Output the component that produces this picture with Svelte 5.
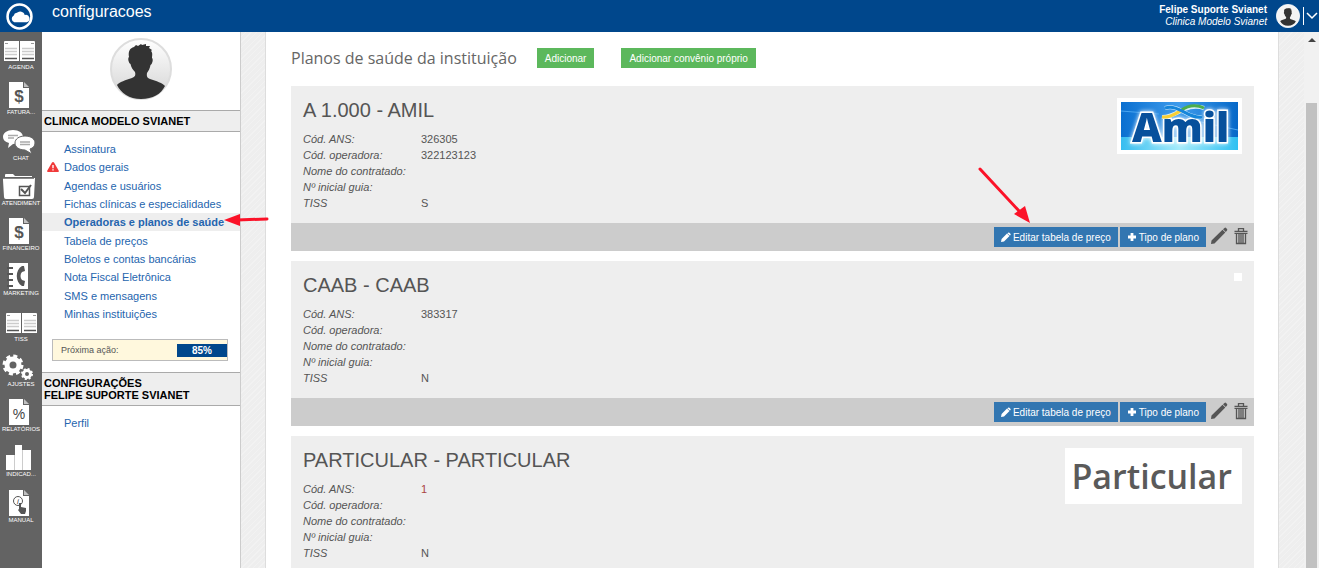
<script lang="ts">
  type Plan = {
    name: string;
    ans: string;
    operator: string;
    tiss: string;
    logo: "amil" | "particular" | "none";
    local?: boolean;
  };

  const modules = [
    { label: "AGENDA", icon: "book" },
    { label: "FATURA...", icon: "money" },
    { label: "CHAT", icon: "chat" },
    { label: "ATENDIMENT", icon: "folder" },
    { label: "FINANCEIRO", icon: "money" },
    { label: "MARKETING", icon: "phone" },
    { label: "TISS", icon: "book" },
    { label: "AJUSTES", icon: "gears" },
    { label: "RELATÓRIOS", icon: "percent" },
    { label: "INDICAD...", icon: "bars" },
    { label: "MANUAL", icon: "manual" },
  ];

  const links = [
    "Assinatura",
    "Dados gerais",
    "Agendas e usuários",
    "Fichas clínicas e especialidades",
    "Operadoras e planos de saúde",
    "Tabela de preços",
    "Boletos e contas bancárias",
    "Nota Fiscal Eletrônica",
    "SMS e mensagens",
    "Minhas instituições",
  ];

  const plans: Plan[] = [
    { name: "A 1.000 - AMIL", ans: "326305", operator: "322123123", tiss: "S", logo: "amil" },
    { name: "CAAB - CAAB", ans: "383317", operator: "", tiss: "N", logo: "none" },
    { name: "PARTICULAR - PARTICULAR", ans: "1", operator: "", tiss: "N", logo: "particular", local: true },
  ];

  let active = $state("Operadoras e planos de saúde");
</script>

{#snippet person()}
  <path
    fill="#333"
    d="M7 47c2-3 9-5 15-7 3-1 4-3 3-6-2-2-4-5-4.500-8-2-1-3-6-1.500-7-1-6 1-9 5-10l2-2 2 1 3-2 1 1 4-1 0 2 4 0-1 2 3 2-1 1c2 2 1 5 1 7 1.500 1 .5 6-1.500 7-.5 3-2 6-3.500 8-.5 3 0 5 3 6 6 2 13 4 15 7-4 8-12 13-24 13S11 55 7 47z"
  />
{/snippet}

{#snippet sheet()}
  <path fill="#fff" d="M9 4h14v6h6v20H9z" />
  <path fill="#fff" d="M24 4l5 5h-5z" opacity=".6" />
{/snippet}

{#snippet moduleIcon(icon: string)}
  <svg class="module-icon" viewBox="0 0 42 30" aria-hidden="true">
    {#if icon === "book"}
      <path fill="#fff" d="M4 9q0-1 1-1h14v20H4zM20 8h14q1 0 1 1v19H20z" />
      <path stroke="#ccc" stroke-width="1.500" d="M5 15.500h12M22 15.500h12M5 18.500h12M22 18.500h12M5 21.500h12M22 21.500h12" />
      <path stroke="#555" stroke-width="1.500" d="M5 25.500h12M22 25.500h12" />
      <path stroke="#999" d="M5 10.500h3M31 10.500h3" />
    {:else if icon === "money"}
      {@render sheet()}
      <text x="19" y="24" font-size="17" font-weight="bold" text-anchor="middle" fill="#555">$</text>
    {:else if icon === "chat"}
      <path fill="#fff" d="M13 6c6 0 10 3 10 7s-4 7-10 7l-5 4 1-5c-4-1-6-3-6-6 0-4 4-7 10-7z" />
      <path
        fill="#fff"
        stroke="#636363"
        d="M25 12c6 0 10 3 10 7 0 3-2 5-5 6l2 5-7-4c-6 0-10-3-10-7s4-7 10-7z"
      />
      <path stroke="#aaa" stroke-width="1.500" d="M8 11.500h10M8 14h6M20 18h10M20 20.500h10" />
    {:else if icon === "folder"}
      <path fill="#fff" d="M3 9h32l-1 19q0 2-2 2H6q-2 0-2-2L3 11z" />
      <path fill="#fff" d="M5 8V6q0-1 1-1h7l2 2h17v1z" />
      <path fill="none" stroke="#888" d="M3 9.500h31" />
      <path fill="none" stroke="#555" stroke-width="1.500" d="M19.500 17.500h10v9h-10z" />
      <path fill="none" stroke="#555" stroke-width="2" d="M21 20l4 4 6-8" />
    {:else if icon === "phone"}
      <path fill="#fff" d="M9 4h19v26H9z" />
      <path stroke="#555" stroke-width="2" d="M7 9h6M7 15h6M7 21h6M7 27h6" />
      <path fill="#555" d="M24 7h-2c-7 4-7 16 0 20h2l1-5-3-1c-2-2-2-6 0-8l3-1z" />
    {:else if icon === "gears"}
      <circle cx="13" cy="15" r="6" fill="none" stroke="#fff" stroke-width="5" />
      <circle cx="13" cy="15" r="9" fill="none" stroke="#fff" stroke-width="3" stroke-dasharray="4 3.070" />
      <circle cx="27" cy="24" r="3.500" fill="none" stroke="#fff" stroke-width="3" />
      <circle cx="27" cy="24" r="5" fill="none" stroke="#fff" stroke-width="2" stroke-dasharray="2 1.930" />
    {:else if icon === "percent"}
      {@render sheet()}
      <text x="19" y="24" font-size="14" text-anchor="middle" fill="#444">%</text>
    {:else if icon === "bars"}
      <path fill="#fff" d="M6 15h8v15H6zM15 5h7v25h-7zM23 10h8v20h-8z" />
      <path fill="#ccc" d="M14 15h1v15h-1zM22 10h1v20h-1z" />
    {:else}
      {@render sheet()}
      <circle cx="18" cy="15" r="4.500" fill="none" stroke="#555" />
      <text x="18" y="18" font-size="8" font-style="italic" text-anchor="middle" fill="#444">i</text>
      <path fill="#555" d="M19 17h2v4l5 1v3l-1 3h-4l-3-4 1-1z" />
    {/if}
  </svg>
{/snippet}

<div class="page">
  <header class="topbar">
    <a class="brand" href="#inicio" aria-label="Início">
      <svg viewBox="0 0 26 26">
        <circle cx="13" cy="13" r="11.500" fill="none" stroke="#fff" stroke-width="2.500" />
        <path fill="#fff" d="M8 18.500a3.500 3.500 0 0 1-.5-6.500 3 3 0 0 1 3-2.500 4.500 4.500 0 0 1 7.500 2 3.600 3.600 0 0 1 2 7z" />
      </svg>
    </a>
    <h1>configuracoes</h1>
    <div class="user">
      <strong>Felipe Suporte Svianet</strong>
      <em>Clinica Modelo Svianet</em>
    </div>
    <svg class="user-photo" viewBox="0 0 62 62" aria-hidden="true">
      <circle cx="31" cy="31" r="30" fill="#f4f4f4" stroke="#fff" stroke-width="2" />
      <g transform="translate(5 5) scale(.84)">{@render person()}</g>
    </svg>
    <button class="user-menu" aria-label="Menu do usuário">
      <svg viewBox="0 0 12 8"><path d="M1 1l5 5 5-5" fill="none" stroke="#fff" stroke-width="1.500" /></svg>
    </button>
  </header>

  <div class="workspace">
    <nav class="rail" aria-label="Módulos">
      {#each modules as mod}
        <a href="#{mod.label.toLowerCase()}" class:shifted={mod.label === "TISS"}>
          {@render moduleIcon(mod.icon)}
          <span>{mod.label}</span>
        </a>
      {/each}
    </nav>

    <aside class="sidebar">
      <svg class="avatar" viewBox="0 0 62 62" role="img" aria-label="Foto do usuário">
        <defs>
          <linearGradient id="avatar-bg" x1="0" y1="0" x2="0" y2="1">
            <stop offset="0" stop-color="#fff" />
            <stop offset="1" stop-color="#d4d4d4" />
          </linearGradient>
        </defs>
        <circle cx="31" cy="31" r="30" fill="url(#avatar-bg)" stroke="#ddd" stroke-width="2" />
        {@render person()}
      </svg>

      <h2>CLINICA MODELO SVIANET</h2>
      <ul class="links">
        {#each links as link}
          <li class:active={link === active}>
            {#if link === "Dados gerais"}
              <svg class="warning" viewBox="0 0 12 10" aria-hidden="true">
                <path fill="#f03a3a" d="M6 0q.7 0 1 .6l4.800 8.200q.4 1.200-.8 1.200H1q-1.200 0-.8-1.200L5 .6q.3-.6 1-.6z" />
                <path stroke="#fff" stroke-width="1.400" d="M6 3v3.200M6 7.200v1.400" />
              </svg>
            {/if}
            <a href="#config" onclick={() => (active = link)}>{link}</a>
            {#if link === "Operadoras e planos de saúde"}
              <svg class="arrow-left" viewBox="0 0 46 14" aria-hidden="true">
                <path stroke="#fb1228" stroke-width="3" stroke-linecap="round" d="M14 7l30-1" />
                <path fill="#fb1228" d="M1 7l16-6v12z" />
              </svg>
            {/if}
          </li>
        {/each}
      </ul>

      <div class="next-action">
        <span>Próxima ação:</span>
        <strong>85%</strong>
      </div>

      <h2>CONFIGURAÇÕES<br />FELIPE SUPORTE SVIANET</h2>
      <ul class="links short">
        <li><a href="#perfil">Perfil</a></li>
      </ul>
    </aside>

    <main>
      <div class="sheet">
        <div class="toolbar">
          <h2>Planos de saúde da instituição</h2>
          <button class="add">Adicionar</button>
          <button class="add">Adicionar convênio próprio</button>
        </div>

        {#each plans as plan, i}
          <article class="plan">
            <div class="plan-body">
              <div class="details">
                <h3>{plan.name}</h3>
                <dl>
                  <dt>Cód. ANS:</dt>
                  <dd class:local={plan.local}>{plan.ans}</dd>
                  <dt>Cód. operadora:</dt>
                  <dd>{plan.operator}</dd>
                  <dt>Nome do contratado:</dt>
                  <dd></dd>
                  <dt>Nº inicial guia:</dt>
                  <dd></dd>
                  <dt>TISS</dt>
                  <dd>{plan.tiss}</dd>
                </dl>
              </div>
              <div class="logo">
                {#if plan.logo === "amil"}
                  <svg class="amil" viewBox="0 0 117 48" role="img" aria-label="Amil">
                    <defs>
                      <linearGradient id="amil-sky">
                        <stop offset="0" stop-color="#0a6fd0" />
                        <stop offset=".5" stop-color="#3f9cec" />
                        <stop offset="1" stop-color="#0668c8" />
                      </linearGradient>
                      <linearGradient id="amil-sea">
                        <stop offset="0" stop-color="#37bdf0" />
                        <stop offset=".5" stop-color="#a5ecfb" />
                        <stop offset="1" stop-color="#2fc0f2" />
                      </linearGradient>
                    </defs>
                    <rect width="117" height="48" fill="url(#amil-sky)" />
                    <rect y="35" width="117" height="13" fill="url(#amil-sea)" />
                    <path stroke="#4ba5ef" d="M0 9l38 3M80 20l37 8" />
                    <text class="amil-name" x="11" y="40">Amil</text>
                    <path fill="none" stroke="#d8effc" stroke-width="4" d="M41 15c14 1 24-15 42-9M44 6c15-4 22 11 37 9" />
                    <path fill="none" stroke="#f8cf35" stroke-width="3" d="M41 15c9 1 14-4 20-7" />
                    <path fill="none" stroke="#4cad4e" stroke-width="3" d="M60 8.500c7-5 15-6 23-2.500" />
                    <path fill="none" stroke="#1686da" stroke-width="3" d="M44 6c15-4 22 11 37 9" />
                  </svg>
                {:else if plan.logo === "particular"}
                  <span class="particular">Particular</span>
                {/if}
              </div>
            </div>
            <footer>
              {#if i === 0}
                <svg class="arrow-down" viewBox="0 0 54 60" aria-hidden="true">
                  <path stroke="#fb1228" stroke-width="3" stroke-linecap="round" d="M2 3l40 43" />
                  <path fill="#fb1228" d="M52 57l-16-9 11-8z" />
                </svg>
              {/if}
              <button class="action">
                <svg viewBox="0 0 10 10" aria-hidden="true">
                  <path fill="#fff" d="M0 10l.6-3L6 1.500 8.500 4 3 9.400zM6.700.9Q7.500 0 8.400.7l1 1q.7.900-.2 1.600l-.3.3L6.400 1.200z" />
                </svg>
                Editar tabela de preço
              </button>
              <button class="action">
                <svg viewBox="0 0 10 10" aria-hidden="true">
                  <path fill="#fff" d="M3.600 1h2.800v2.600H9v2.800H6.400V9H3.600V6.400H1V3.600h2.600z" />
                </svg>
                Tipo de plano
              </button>
              <button class="tool" aria-label="Editar">
                <svg viewBox="0 0 18 18" aria-hidden="true">
                  <path fill="#555" d="M1 17l.5-3.500L12.500 2.700l2.800 2.800L4.500 16.400zM13 2.200L14.500.9q.8-.7 1.600 0l.9 1q.7.8 0 1.600L15.800 5z" />
                </svg>
              </button>
              <button class="tool" aria-label="Excluir">
                <svg viewBox="0 0 18 18" aria-hidden="true">
                  <path fill="none" stroke="#555" stroke-width="1.300" d="M6.500 4V1.600h5V4M2.500 4.300h13M2.500 6.300h13M4.500 7v9.500h9V7M7 7v9M9 7v9M11 7v9" />
                </svg>
              </button>
            </footer>
          </article>
        {/each}
      </div>
    </main>

    <div class="scrollbar" aria-hidden="true">
      <svg viewBox="0 0 8 4"><path fill="#444" d="M4 0l4 4H0z" /></svg>
      <div class="thumb"></div>
    </div>
  </div>
</div>

<style>
  :global(body) {
    margin: 0;
  }
  .page {
    display: flex;
    flex-direction: column;
    height: 100vh;
    overflow: hidden;
    font-family: "Liberation Sans", Arial, sans-serif;
    font-size: 11px;
    color: #555;
  }
  h1,
  h2,
  h3,
  ul,
  dl,
  dd {
    margin: 0;
    padding: 0;
  }
  a {
    color: #2565ae;
    text-decoration: none;
  }
  button {
    border: 0;
    padding: 0;
    font: inherit;
    cursor: pointer;
  }
  svg {
    display: block;
  }

  .topbar {
    display: flex;
    align-items: center;
    flex: none;
    height: 32px;
    background: #00478c;
    color: #fff;
  }
  .brand {
    width: 46px;
    padding-left: 6px;
  }
  .brand svg {
    width: 27px;
    height: 27px;
  }
  h1 {
    flex: 1;
    height: 32px;
    font-size: 16px;
    font-weight: 400;
    line-height: 24px;
  }
  .user {
    display: flex;
    flex-direction: column;
    font-size: 10px;
    line-height: 12px;
    text-align: right;
  }
  .user-photo {
    width: 24px;
    height: 24px;
    margin: 0 3px 0 9px;
  }
  .user-menu {
    padding: 5px 1px 5px 2px;
    border-left: 1px solid #fff;
    background: none;
  }
  .user-menu svg {
    width: 12px;
    height: 8px;
  }

  .workspace {
    display: flex;
    flex: 1;
    min-height: 0;
  }
  .rail {
    display: grid;
    grid-auto-rows: 1fr;
    flex: none;
    box-sizing: border-box;
    width: 42px;
    min-height: 498px;
    padding: 1px 0 37px;
    overflow: hidden;
    background: #636363;
  }
  .rail a {
    min-width: 0;
    color: #fff;
    font-size: 6px;
    line-height: 8px;
    text-align: center;
    white-space: nowrap;
  }
  .rail a span {
    display: block;
  }
  .module-icon {
    width: 42px;
    height: 30px;
  }
  .shifted .module-icon {
    padding-left: 2px;
  }

  .sidebar {
    flex: none;
    width: 198px;
    border-right: 1px solid #ccc;
    background: #fff;
  }
  .avatar {
    width: 62px;
    height: 62px;
    margin: 6px auto 10px;
  }
  .sidebar h2 {
    padding: 4px 2px;
    border: solid #aaa;
    border-width: 1px 0;
    background: #eee;
    color: #000;
    font-size: 11px;
    line-height: 12px;
  }
  .links {
    display: grid;
    grid-auto-rows: 1fr;
    min-height: 183px;
    padding-top: 8px;
    list-style: none;
  }
  .links.short {
    min-height: 0;
  }
  .links li {
    position: relative;
    display: flex;
    align-items: center;
    min-height: 18px;
    padding-left: 22px;
    white-space: nowrap;
  }
  .links .active {
    background: #eee;
    font-weight: 700;
  }
  .warning {
    position: absolute;
    left: 5px;
    width: 12px;
    height: 10px;
  }
  .arrow-left {
    position: absolute;
    left: 181px;
    top: 0;
    z-index: 2;
    width: 46px;
    height: 14px;
  }
  .next-action {
    display: flex;
    align-items: center;
    justify-content: space-between;
    height: 20px;
    margin: 16px 12px 11px 10px;
    padding-left: 8px;
    border: 1px solid #bbb;
    background: #fff8dd;
    font-size: 9px;
  }
  .next-action strong {
    width: 50px;
    background: #00478c;
    color: #fff;
    font-size: 10px;
    line-height: 13px;
    text-align: center;
  }

  main {
    flex: 1;
    min-width: 0;
    padding: 0 25px 0 24px;
    overflow-y: auto;
    scrollbar-width: none;
    background: repeating-linear-gradient(135deg, #eee 0 3px, #f2f2f2 3px 4px);
  }
  .sheet {
    padding: 16px 24px 10px 25px;
    border: solid #ddd;
    border-width: 0 1px;
    background: #fff;
  }
  .toolbar {
    display: flex;
    align-items: center;
    height: 20px;
    margin-bottom: 18px;
  }
  .toolbar h2 {
    margin-right: 20px;
    color: #666;
    font-family: "Open Sans", "Noto Sans", sans-serif;
    font-size: 16px;
    font-weight: 400;
    white-space: nowrap;
  }
  .add {
    height: 20px;
    margin-right: 27px;
    padding: 0 8px;
    background: #5cb85c;
    color: #fff;
    font-size: 10px;
  }

  .plan {
    margin-bottom: 10px;
    background: #eee;
  }
  .plan-body {
    display: flex;
    justify-content: space-between;
    align-items: flex-start;
    padding: 12px;
  }
  h3 {
    margin-bottom: 9px;
    font-size: 20px;
    font-weight: 400;
    line-height: 24px;
  }
  dl {
    display: grid;
    grid-template-columns: 118px auto;
    grid-auto-rows: 16px;
    line-height: 16px;
  }
  dt {
    font-style: italic;
  }
  .local {
    color: #a94442;
  }
  .logo {
    padding: 4px;
    background: #fff;
  }
  .amil {
    width: 117px;
    height: 48px;
  }
  .amil-name {
    fill: #07509c;
    font-family: "Open Sans", sans-serif;
    font-size: 41px;
    font-weight: 800;
    paint-order: stroke;
    stroke: #fff;
    stroke-width: 3px;
    filter: drop-shadow(0 0 2px #fff);
  }
  .particular {
    display: block;
    padding: 0 6px 0 2px;
    color: #5a5a5a;
    font-family: "Open Sans", "Noto Sans", sans-serif;
    font-size: 34px;
    font-weight: 600;
    line-height: 48px;
  }

  footer {
    position: relative;
    display: flex;
    align-items: center;
    justify-content: flex-end;
    gap: 2px;
    height: 28px;
    padding-right: 4px;
    background: #ccc;
  }
  .action {
    display: flex;
    align-items: center;
    gap: 2px;
    height: 20px;
    padding: 0 7px;
    background: #3276b1;
    color: #fff;
    font-size: 10px;
  }
  .action svg {
    width: 10px;
    height: 10px;
  }
  .tool {
    padding: 0 0 2px 2px;
    background: none;
  }
  .tool svg {
    width: 18px;
    height: 18px;
  }
  .arrow-down {
    position: absolute;
    right: 222px;
    bottom: 25px;
    width: 54px;
    height: 60px;
  }

  .scrollbar {
    display: flex;
    flex-direction: column;
    align-items: center;
    flex: none;
    width: 15px;
    background: #f1f1f1;
  }
  .scrollbar svg {
    width: 8px;
    height: 4px;
    margin: 6px 0 61px;
  }
  .thumb {
    flex: 1;
    width: 11px;
    background: #c1c1c1;
  }
</style>
